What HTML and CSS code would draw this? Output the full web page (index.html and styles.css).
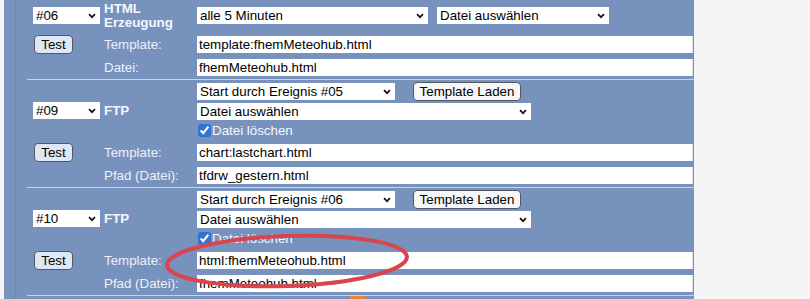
FILE: index.html
```html
<!DOCTYPE html>
<html lang="de">
<head>
  <meta charset="UTF-8" />
  <title>Meteohub Export</title>
  <link rel="stylesheet" href="styles.css">
</head>
<body>
  <div class="panel">
    <div class="inner">

      <div class="block first">
        <div class="num"><select class="sel sel-num"><option>#06</option></select></div>
        <div class="title">HTML<br>Erzeugung</div>
        <div class="field">
          <select class="sel w231"><option>alle 5 Minuten</option></select>
          <select class="sel w172 gap9"><option>Datei auswählen</option></select>
        </div>
        <div class="num"><button class="btn btn-test">Test</button></div>
        <div class="lbl">Template:</div>
        <div class="field"><input class="txt" value="template:fhemMeteohub.html"></div>
        <div></div>
        <div class="lbl">Datei:</div>
        <div class="field"><input class="txt" value="fhemMeteohub.html"></div>
      </div>

      <div class="block ftp">
        <div class="num span3"><select class="sel sel-num"><option>#09</option></select></div>
        <div class="title span3">FTP</div>
        <div class="field">
          <select class="sel w198"><option>Start durch Ereignis #05</option></select>
          <button class="btn btn-load">Template Laden</button>
        </div>
        <div class="field"><select class="sel w334"><option>Datei auswählen</option></select></div>
        <div class="field check"><input type="checkbox" checked><span>Datei löschen</span></div>
        <div class="num"><button class="btn btn-test">Test</button></div>
        <div class="lbl">Template:</div>
        <div class="field"><input class="txt" value="chart:lastchart.html"></div>
        <div></div>
        <div class="lbl">Pfad (Datei):</div>
        <div class="field"><input class="txt" value="tfdrw_gestern.html"></div>
      </div>

      <div class="block ftp">
        <div class="num span3"><select class="sel sel-num"><option>#10</option></select></div>
        <div class="title span3">FTP</div>
        <div class="field">
          <select class="sel w198"><option>Start durch Ereignis #06</option></select>
          <button class="btn btn-load">Template Laden</button>
        </div>
        <div class="field"><select class="sel w334"><option>Datei auswählen</option></select></div>
        <div class="field check"><input type="checkbox" checked><span>Datei löschen</span></div>
        <div class="num"><button class="btn btn-test">Test</button></div>
        <div class="lbl">Template:</div>
        <div class="field"><input class="txt" value="html:fhemMeteohub.html"></div>
        <div></div>
        <div class="lbl">Pfad (Datei):</div>
        <div class="field"><input class="txt" value="fhemMeteohub.html"></div>
      </div>

      <div class="next"><span class="mark"></span></div>
    </div>
  </div>

  <!-- red marker drawn over the screenshot -->
  <svg class="marker" width="810" height="299" viewBox="0 0 810 299">
    <ellipse cx="287" cy="261" rx="120" ry="25" transform="rotate(-2 287 261)" fill="none" stroke="#d9454c" stroke-width="4"/>
  </svg>
</body>
</html>
```

FILE: styles.css
```css
body {
  margin: 0;
  background: #f5f5f5;
  font-family: "Liberation Sans", Arial, sans-serif;
  font-size: 13.33px;
  position: relative;
  height: 299px;
  overflow: hidden;
}
.panel {
  margin-left: 4px;
  width: 690px;
  padding-left: 11px;
  box-sizing: border-box;
  background: #7892be;
}
.inner {
  border-left: 1px solid #6b86b4;
}
.block {
  display: grid;
  grid-template-columns: 77px 93px 496px;
  align-items: center;
  margin-left: 11px;
  border-bottom: 1px solid #c6d3ea;
}
.first {
  grid-template-rows: 33px 23px 23px;
}
.first > :nth-child(-n+3) {
  margin-bottom: 2px;
}
.ftp {
  grid-template-rows: 23px 17px 21px 23px 23px;
}
.span3 {
  grid-row: 1 / 4;
}
.num {
  padding-left: 6px;
}
.title {
  color: #f4f7fc;
  font-weight: bold;
  line-height: 14px;
}
.lbl {
  color: #edf1f8;
}
.field {
  display: flex;
  align-items: center;
}
.sel {
  appearance: none;
  -webkit-appearance: none;
  height: 17px;
  border: none;
  border-radius: 0;
  padding: 0 0 0 3px;
  margin: 0;
  font: inherit;
  color: #000;
  background: #fff url("data:image/svg+xml,%3Csvg xmlns='http://www.w3.org/2000/svg' width='8' height='6'%3E%3Cpath d='M1 1.2l3 3 3-3' fill='none' stroke='%23111' stroke-width='1.7'/%3E%3C/svg%3E") no-repeat right 4px center;
}
.sel-num { width: 67px; }
.w231 { width: 231px; }
.w172 { width: 172px; }
.w198 { width: 198px; }
.w334 { width: 334px; }
.gap9 { margin-left: 9px; }
.txt {
  width: 496px;
  height: 17px;
  box-sizing: border-box;
  border: none;
  border-right: 1px solid #d9dfe8;
  padding: 0 2px;
  margin: 0;
  font: inherit;
  color: #000;
  background: #fff;
}
.btn {
  height: 19px;
  box-sizing: border-box;
  border: 1px solid #55595f;
  border-radius: 4px;
  padding: 0 5px;
  font: inherit;
  color: #000;
  line-height: 15px;
}
.btn-test {
  width: 39px;
  margin-left: 1px;
  background: #dde7f5;
}
.btn-load {
  width: 108px;
  margin-left: 18px;
  background: #f7f7f7;
}
.check {
  color: #f4f7fc;
}
.check input {
  width: 13px;
  height: 13px;
  margin: 0 1px 0 1px;
  accent-color: #2f74d0;
}
.next {
  height: 10px;
}
.mark {
  display: block;
  width: 15px;
  height: 8px;
  margin-left: 334px;
  background: #e8843b;
}
.marker {
  position: absolute;
  left: 0;
  top: 0;
  pointer-events: none;
}
```
